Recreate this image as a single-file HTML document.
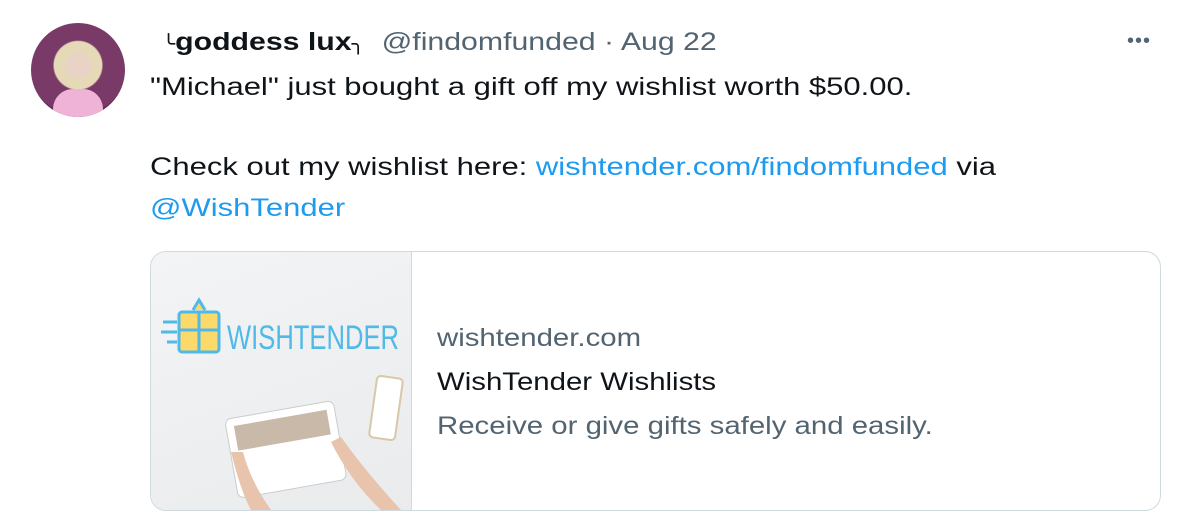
<!DOCTYPE html>
<html><head><meta charset="utf-8"><style>
body{margin:0;width:1192px;height:532px;background:#fff;font-family:"Liberation Sans",sans-serif;position:relative;overflow:hidden}
.av{position:absolute;left:31px;top:23px;width:94px;height:94px;border-radius:50%;background:radial-gradient(circle at 50% 45%,#e9d3c6 0 18%,#e6d9b8 19% 34%,#7a3a68 36% 70%,#5a2650 72%);overflow:hidden}
.av .b{position:absolute;left:22px;top:66px;width:50px;height:40px;border-radius:20px 20px 0 0;background:#f0b3d8}
.t{position:absolute;left:150px;color:#0f1419;font-size:25px;white-space:nowrap;transform-origin:0 0;transform:scaleX(1.24)}
.g{color:#536471}.l{color:#1d9bf0}
.card{position:absolute;left:150px;top:251px;width:1009px;height:258px;border:1px solid #cfd9de;border-radius:16px;overflow:hidden}
.img{position:absolute;left:0;top:0;width:260px;height:258px;border-right:1px solid #cfd9de;background:linear-gradient(160deg,#f3f4f5,#e9ebed)}
.tx{position:absolute;left:286px;font-size:25px;white-space:nowrap;transform-origin:0 0;transform:scaleX(1.175)}
</style></head><body>
<div class="av"><div class="b"></div></div>
<div class="t" style="top:28px;left:162px;transform:scaleX(1.21)"><span style="font-size:18px">╰</span><b>goddess lux</b><span style="font-size:18px">╮</span> &nbsp;<span class="g">@findomfunded · Aug 22</span></div>
<div style="position:absolute;left:1127px;top:30px;color:#536471;font-size:20px;letter-spacing:1px">•••</div>
<div class="t" style="top:73px">"Michael" just bought a gift off my wishlist worth $50.00.</div>
<div class="t" style="top:153px">Check out my wishlist here: <span class="l">wishtender.com/findomfunded</span> via</div>
<div class="t" style="top:194px"><span class="l">@WishTender</span></div>
<div class="card">
<div class="img">
<svg width="260" height="258" viewBox="0 0 260 258">
<g stroke="#4fb9e8" stroke-width="3" fill="none">
<rect x="28" y="60" width="40" height="40" rx="3" fill="#fbd96a"/>
<line x1="48" y1="60" x2="48" y2="100"/><line x1="28" y1="78" x2="68" y2="78"/>
<line x1="12" y1="70" x2="26" y2="70"/><line x1="10" y1="80" x2="26" y2="80"/><line x1="16" y1="90" x2="26" y2="90"/>
<path d="M42 58 L48 48 L54 58" fill="#fbd96a"/>
</g>
<text x="76" y="97" font-family="Liberation Sans" font-size="34" fill="#4fb9e8" textLength="172" lengthAdjust="spacingAndGlyphs">WISHTENDER</text>
<g transform="rotate(-10 120 200)"><rect x="80" y="160" width="110" height="80" rx="6" fill="#fff" stroke="#ccc"/><rect x="88" y="168" width="94" height="25" fill="#c9b9a8"/></g>
<rect x="222" y="125" width="26" height="62" rx="4" fill="#fff" stroke="#d9c8a6" stroke-width="2" transform="rotate(8 235 156)"/>
<path d="M80 200 Q90 240 100 258 L120 258 Q100 230 92 200Z" fill="#e9c4ad"/>
<path d="M180 190 Q200 230 230 258 L250 258 Q215 220 190 185Z" fill="#e9c4ad"/>
</svg>
</div>
<div class="tx g" style="top:72px">wishtender.com</div>
<div class="tx" style="top:116px;color:#0f1419">WishTender Wishlists</div>
<div class="tx g" style="top:160px">Receive or give gifts safely and easily.</div>
</div>
</body></html>
